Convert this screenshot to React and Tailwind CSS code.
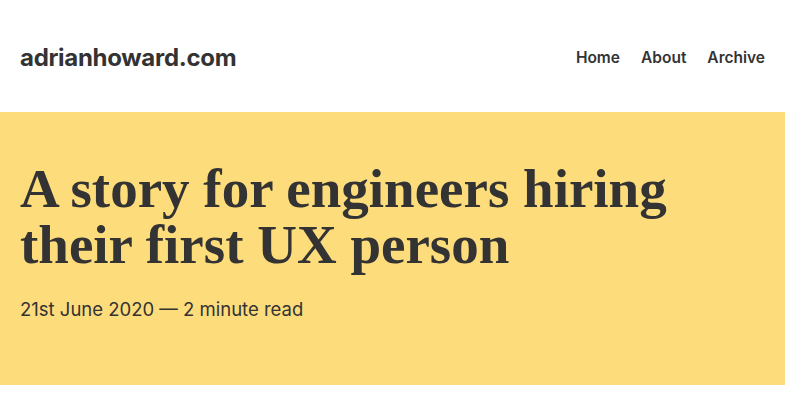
export default function App() {
  return (
    <div className="w-[785px] bg-white text-[#333] font-['Inter',sans-serif] min-h-[419px]">
      <header className="h-[112px] flex items-center justify-between px-5 pt-[3px]">
        <a className="text-[24px] font-bold tracking-[-0.3px]">adrianhoward.com</a>
        <nav className="flex items-center gap-[21px] text-[15.5px] font-semibold">
          <a>Home</a>
          <a>About</a>
          <a>Archive</a>
        </nav>
      </header>
      <section className="bg-[#fddc7c] h-[273px] px-5 pt-[49px]">
        <h1 className="font-['Liberation_Serif',serif] font-bold text-[55px] leading-[56px] max-w-[720px]">
          A story for engineers hiring their first UX person
        </h1>
        <p className="mt-[23px] text-[18.5px]">21st June 2020 — 2 minute read</p>
      </section>
    </div>
  )
}
